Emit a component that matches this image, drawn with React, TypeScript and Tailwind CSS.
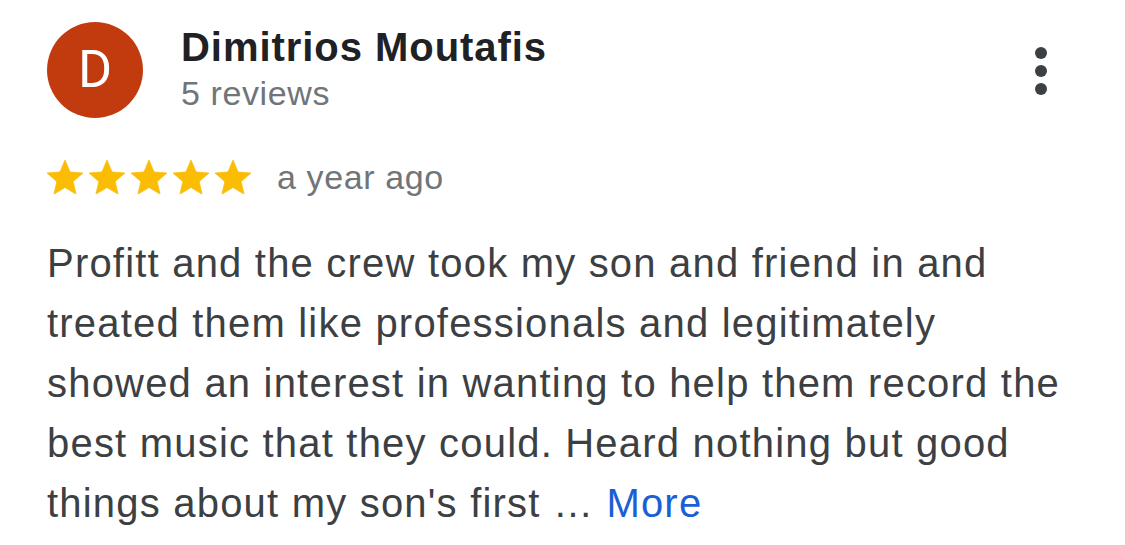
import React from "react";

function Star() {
  return (
    <svg width="36" height="34.2" viewBox="2 2 20 19" className="shrink-0">
      <path
        d="M12 17.27L18.18 21l-1.64-7.03L22 9.24l-7.19-.61L12 2 9.19 8.63 2 9.24l5.46 4.73L5.82 21z"
        fill="#fbbc04"
        stroke="#fbbc04"
        strokeWidth="0.4"
        strokeLinejoin="round"
      />
    </svg>
  );
}

export default function App() {
  return (
    <div
      className="w-[1125px] h-[545px] bg-white pt-[22px] pl-[47px] overflow-hidden"
      style={{ fontFamily: '"Liberation Sans", Arial, sans-serif' }}
    >
      <div className="flex items-start">
        <div className="w-[96px] h-[96px] rounded-full bg-[#c23b0e] flex items-center justify-center shrink-0">
          <span
            className="text-white text-[52px] leading-none"
            style={{ fontFamily: 'Roboto, "Liberation Sans", sans-serif' }}
          >
            D
          </span>
        </div>
        <div className="ml-[38px] mt-[1px] flex-1 flex flex-col">
          <div className="text-[40px] leading-[48px] font-bold text-[#202124] tracking-[0.95px]">
            Dimitrios Moutafis
          </div>
          <div className="text-[34px] leading-[44px] text-[#70757a] tracking-[0.6px]">
            5 reviews
          </div>
        </div>
        <div className="mt-[25px] mr-[78px] flex flex-col gap-[6px]">
          <div className="w-[12px] h-[12px] rounded-full bg-[#3c4043]" />
          <div className="w-[12px] h-[12px] rounded-full bg-[#3c4043]" />
          <div className="w-[12px] h-[12px] rounded-full bg-[#3c4043]" />
        </div>
      </div>

      <div className="mt-[37px] flex items-center h-[44px]">
        <div className="flex items-center gap-[6px]">
          <Star />
          <Star />
          <Star />
          <Star />
          <Star />
        </div>
        <span className="ml-[26px] text-[34px] leading-[44px] text-[#70757a] tracking-[0.6px]">
          a year ago
        </span>
      </div>

      <div className="mt-[34px] text-[40px] leading-[60px] text-[#3c4043] tracking-[1.2px] whitespace-nowrap">
        <div>Profitt and the crew took my son and friend in and</div>
        <div>treated them like professionals and legitimately</div>
        <div>showed an interest in wanting to help them record the</div>
        <div>best music that they could. Heard nothing but good</div>
        <div>
          things about my son's first … <span className="text-[#1a5fd4]">More</span>
        </div>
      </div>
    </div>
  );
}
